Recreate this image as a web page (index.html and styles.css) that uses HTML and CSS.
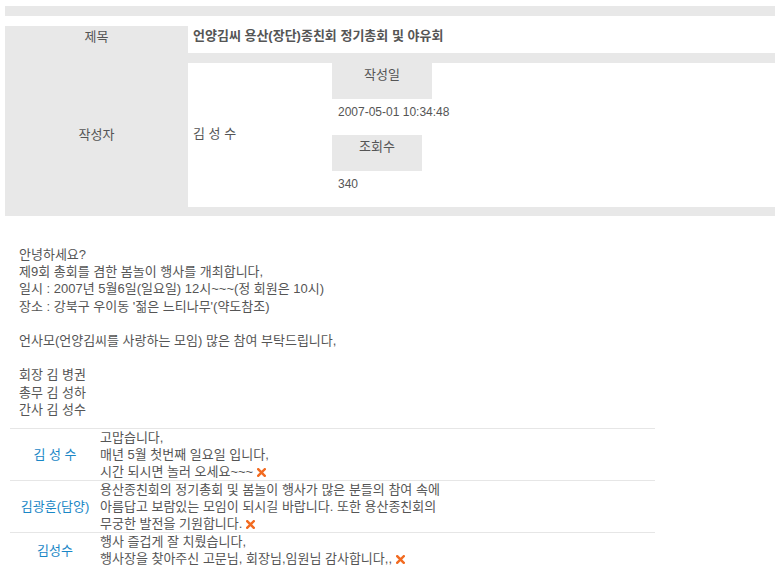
FILE: index.html
```html
<!DOCTYPE html>
<html lang="ko">
<head>
<meta charset="utf-8">
<title>언양김씨 용산(장단)종친회 정기총회 및 야유회</title>
<link rel="stylesheet" href="styles.css">
</head>
<body>
<div class="page">
  <div class="topbar"></div>

  <div class="info">
    <div class="label label-title">제목</div>
    <div class="title-cell">언양김씨 용산(장단)종친회 정기총회 및 야유회</div>
    <div class="label label-writer">작성자</div>
    <div class="writer-wrap">
      <div class="writer-box">
        <div class="writer-name">김 성 수</div>
        <div class="meta">
          <div class="meta-label meta-date">작성일</div>
          <div class="meta-value">2007-05-01 10:34:48</div>
          <div class="meta-label meta-hits">조회수</div>
          <div class="meta-value">340</div>
        </div>
      </div>
    </div>
  </div>

  <div class="content">안녕하세요?<br>제9회 총회를 겸한 봄놀이 행사를 개최합니다,<br>일시 : 2007년 5월6일(일요일) 12시~~~(정 회원은 10시)<br>장소 : 강북구 우이동 '젊은 느티나무'(약도참조)<br><br>언사모(언양김씨를 사랑하는 모임) 많은 참여 부탁드립니다,<br><br>회장 김 병권<br>총무 김 성하<br>간사 김 성수</div>

  <div class="comments">
    <div class="comment">
      <div class="c-name">김 성 수</div>
      <div class="c-text">고맙습니다,<br>매년 5월 첫번째 일요일 입니다,<br>시간 되시면 놀러 오세요~~~<svg class="del" width="9" height="9" viewBox="0 0 9 9"><path d="M1.2 1.2 L7.8 7.8 M7.8 1.2 L1.2 7.8" stroke="#f26b21" stroke-width="2.4" stroke-linecap="square"/></svg></div>
    </div>
    <div class="comment">
      <div class="c-name">김광훈(담양)</div>
      <div class="c-text">용산종친회의 정기총회 및 봄놀이 행사가 많은 분들의 참여 속에<br>아름답고 보람있는 모임이 되시길 바랍니다. 또한 용산종친회의<br>무궁한 발전을 기원합니다.<svg class="del" width="9" height="9" viewBox="0 0 9 9"><path d="M1.2 1.2 L7.8 7.8 M7.8 1.2 L1.2 7.8" stroke="#f26b21" stroke-width="2.4" stroke-linecap="square"/></svg></div>
    </div>
    <div class="comment">
      <div class="c-name">김성수</div>
      <div class="c-text">행사 즐겁게 잘 치뤘습니다,<br>행사장을 찾아주신 고문님, 회장님,임원님 감사합니다,,<svg class="del" width="9" height="9" viewBox="0 0 9 9"><path d="M1.2 1.2 L7.8 7.8 M7.8 1.2 L1.2 7.8" stroke="#f26b21" stroke-width="2.4" stroke-linecap="square"/></svg></div>
    </div>
  </div>
</div>
</body>
</html>
```

FILE: styles.css
```css
html, body {
  margin: 0;
  padding: 0;
  background: #ffffff;
}

body {
  font-family: "Liberation Sans", "Noto Sans CJK KR", sans-serif;
  font-size: 13px;
  color: #555555;
}

.page {
  padding: 6px 6px 0 5px;
}

.topbar {
  height: 10px;
  background: #e8e8e8;
}

.info {
  margin-top: 10px;
  display: grid;
  grid-template-columns: 183px 1fr;
  grid-template-rows: 27px auto;
  background: #e8e8e8;
}

.label {
  display: flex;
  align-items: center;
  justify-content: center;
  line-height: 17px;
}

.label-title {
  padding-bottom: 6px;
}

.title-cell {
  background: #ffffff;
  display: flex;
  align-items: center;
  padding-left: 5px;
  padding-bottom: 10px;
  font-weight: bold;
  color: #555555;
}

.writer-wrap {
  padding: 10px 0 9px 0;
}

.writer-box {
  background: #ffffff;
  height: 144px;
  display: flex;
}

.writer-name {
  width: 139px;
  padding-left: 5px;
  display: flex;
  align-items: center;
  padding-bottom: 5px;
}

.meta {
  display: flex;
  flex-direction: column;
}

.meta-label {
  background: #e8e8e8;
  height: 36px;
  box-sizing: border-box;
  padding-top: 3px;
  line-height: 17px;
  text-align: center;
}

.meta-date {
  width: 100px;
}

.meta-hits {
  width: 90px;
}

.meta-value {
  height: 36px;
  box-sizing: border-box;
  padding: 5px 0 0 6px;
  line-height: 17px;
  font-size: 12px;
}

.content {
  padding: 30px 0 0 14px;
  line-height: 17.2px;
}

.comments {
  margin: 10px 0 0 5px;
  width: 645px;
}

.comment {
  display: flex;
  border-top: 1px solid #e6e6e6;
}

.c-name {
  width: 90px;
  display: flex;
  align-items: center;
  justify-content: center;
  color: #1a87c6;
  padding-bottom: 2px;
}

.c-text {
  flex: 1;
  line-height: 17px;
  color: #555555;
}

.del {
  margin-left: 4px;
  vertical-align: -1px;
}
```
